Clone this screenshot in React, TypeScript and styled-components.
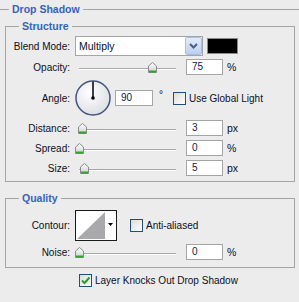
import styled, { createGlobalStyle } from "styled-components";

const GlobalStyle = createGlobalStyle`
  html, body {
    margin: 0;
    padding: 0;
    background: #ececec;
  }
  body {
    font-family: "Liberation Sans", Arial, sans-serif;
    font-size: 10px;
    color: #0b0f1e;
  }
`;

const Panel = styled.div`
  width: 299px;
  height: 302px;
  overflow: hidden;
  background: #ececec;
`;

const Group = styled.fieldset`
  margin: 3px 0 0 0;
  padding: 0;
  border: none;
  border-top: 1px solid #a5a5a5;
  min-width: 0;
  display: flex;
  flex-direction: column;
`;

const GroupTitle = styled.legend`
  margin-left: 9px;
  padding: 0 3px;
  font-size: 10.5px;
  font-weight: bold;
  color: #3563bf;
  line-height: 13px;
`;

const Box = styled.fieldset<{ $mt: number; $pt: number; $pb: number }>`
  margin: ${({ $mt }) => $mt}px 4px 0 5px;
  padding: ${({ $pt }) => $pt}px 0 ${({ $pb }) => $pb}px 0;
  border: 1px solid #a5a5a5;
  min-width: 0;
  display: flex;
  flex-direction: column;
`;

const BoxTitle = styled.legend`
  margin-left: 13px;
  padding: 0 3px;
  font-size: 10.5px;
  font-weight: bold;
  color: #3563bf;
  line-height: 13px;
`;

const Row = styled.div<{ $h: number }>`
  display: flex;
  align-items: center;
  height: ${({ $h }) => $h}px;
`;

const Label = styled.span`
  width: 64px;
  margin-right: 5px;
  text-align: right;
  flex-shrink: 0;
  white-space: nowrap;
`;

const Select = styled.div`
  position: relative;
  box-sizing: border-box;
  width: 128px;
  height: 20px;
  border: 1px solid #a5a5a5;
  background: #fff;
  display: flex;
  align-items: center;
  padding-left: 3px;
  font-size: 10.5px;
`;

const SelectButton = styled.div`
  position: absolute;
  right: 0;
  top: 0;
  bottom: 0;
  width: 17px;
  box-sizing: border-box;
  border: 1px solid #a9bfe6;
  border-radius: 2px;
  background: linear-gradient(#e3ecfc, #bccff1);
  display: flex;
  align-items: center;
  justify-content: center;
`;

const Swatch = styled.div`
  width: 31px;
  height: 16px;
  box-sizing: border-box;
  margin-left: 4px;
  border: 1px solid #8a8a8a;
  background: #000;
`;

const SliderWrap = styled.div`
  position: relative;
  width: 111px;
  height: 20px;
  flex-shrink: 0;
`;

const Track = styled.div`
  position: absolute;
  left: 4px;
  width: 97px;
  top: 11px;
  height: 1px;
  background: #a8a8a8;
  border-bottom: 1px solid #fff;
`;

const Thumb = styled.svg`
  position: absolute;
  top: 5px;
`;

const NumField = styled.div<{ $w: number }>`
  box-sizing: border-box;
  width: ${({ $w }) => $w}px;
  height: 16px;
  border: 1px solid #a5a5a5;
  background: #fff;
  padding-left: 5px;
  line-height: 14px;
  flex-shrink: 0;
  color: #10204a;
`;

const Unit = styled.span`
  margin-left: 4px;
  font-size: 10.5px;
`;

const Deg = styled.span`
  margin-left: 6px;
  align-self: flex-start;
  margin-top: 11px;
`;

const Check = styled.div<{ $ml: number }>`
  width: 13px;
  height: 13px;
  box-sizing: border-box;
  margin-left: ${({ $ml }) => $ml}px;
  margin-right: 3px;
  border: 1px solid #1c5180;
  background: linear-gradient(135deg, #dcdcd7, #ffffff);
  display: flex;
  align-items: center;
  justify-content: center;
  flex-shrink: 0;
`;

const CheckRow = styled.div`
  display: flex;
  align-items: center;
  height: 20px;
  margin-top: 2px;
  padding-left: 79px;
`;

const Slider = ({ value }: { value: number }) => (
  <SliderWrap>
    <Track />
    <Thumb
      width="9"
      height="11"
      viewBox="0 0 9 11"
      style={{ left: 4 + (value / 100) * 97 - 4 }}
    >
      <defs>
        <linearGradient id="tg" x1="0" y1="0" x2="0" y2="1">
          <stop offset="0" stopColor="#ffffff" />
          <stop offset="1" stopColor="#cfcfcf" />
        </linearGradient>
      </defs>
      <polygon points="4.5,0.5 8.5,4 8.5,10.5 0.5,10.5 0.5,4" fill="url(#tg)" stroke="#8a8a8a" />
      <rect x="1" y="8.5" width="7" height="2" fill="#2ea52e" />
    </Thumb>
  </SliderWrap>
);

const SliderRow = ({
  label,
  value,
  text,
  unit,
  h = 20,
}: {
  label: string;
  value: number;
  text: string;
  unit: string;
  h?: number;
}) => (
  <Row $h={h}>
    <Label>{label}</Label>
    <Slider value={value} />
    <NumField $w={37}>{text}</NumField>
    <Unit>{unit}</Unit>
  </Row>
);

const CheckMark = () => (
  <svg width="11" height="11" viewBox="0 0 11 11">
    <path d="M2 5.5 L4.5 8 L9.5 2.5" fill="none" stroke="#21a121" strokeWidth="2" />
  </svg>
);

const Dial = () => (
  <svg width="36" height="36" viewBox="0 0 36 36">
    <defs>
      <radialGradient id="dg" cx="0.4" cy="0.35" r="0.7">
        <stop offset="0" stopColor="#ffffff" />
        <stop offset="1" stopColor="#dcdde2" />
      </radialGradient>
    </defs>
    <circle cx="18" cy="18" r="17" fill="url(#dg)" stroke="#44557f" strokeWidth="1.5" />
    <line x1="18" y1="18" x2="18" y2="1.5" stroke="#000" strokeWidth="1.5" />
    <circle cx="18" cy="18" r="1.8" fill="#000" />
  </svg>
);

const Contour = () => (
  <svg width="42" height="31" viewBox="0 0 42 31">
    <rect x="0.5" y="0.5" width="41" height="30" fill="#fff" stroke="#1a1a1a" />
    <polygon points="2,29 30,2 30,29" fill="#a9a9ab" />
    <polygon points="33,13 38,13 35.5,16" fill="#000" />
  </svg>
);

export default function App() {
  return (
    <Panel>
      <GlobalStyle />
      <Group>
        <GroupTitle>Drop Shadow</GroupTitle>
        <Box $mt={4} $pt={3} $pb={3}>
          <BoxTitle>Structure</BoxTitle>
          <Row $h={20}>
            <Label>Blend Mode:</Label>
            <Select>
              Multiply
              <SelectButton>
                <svg width="9" height="6" viewBox="0 0 9 6">
                  <path d="M1 1 L4.5 4.5 L8 1" fill="none" stroke="#4b5f85" strokeWidth="2" />
                </svg>
              </SelectButton>
            </Select>
            <Swatch />
          </Row>
          <SliderRow label="Opacity:" value={75} text="75" unit="%" h={22} />
          <Row $h={40}>
            <Label>Angle:</Label>
            <Dial />
            <NumField $w={38} style={{ marginLeft: 4 }}>90</NumField>
            <Deg>°</Deg>
            <Check $ml={10} />
            <span>Use Global Light</span>
          </Row>
          <SliderRow label="Distance:" value={3} text="3" unit="px" />
          <SliderRow label="Spread:" value={0} text="0" unit="%" />
          <SliderRow label="Size:" value={5} text="5" unit="px" />
        </Box>
        <Box $mt={10} $pt={5} $pb={3}>
          <BoxTitle>Quality</BoxTitle>
          <Row $h={30}>
            <Label>Contour:</Label>
            <Contour />
            <Check $ml={13} />
            <span>Anti-aliased</span>
          </Row>
          <SliderRow label="Noise:" value={0} text="0" unit="%" h={24} />
        </Box>
        <CheckRow>
          <Check $ml={0}>
            <CheckMark />
          </Check>
          <span>Layer Knocks Out Drop Shadow</span>
        </CheckRow>
      </Group>
    </Panel>
  );
}
